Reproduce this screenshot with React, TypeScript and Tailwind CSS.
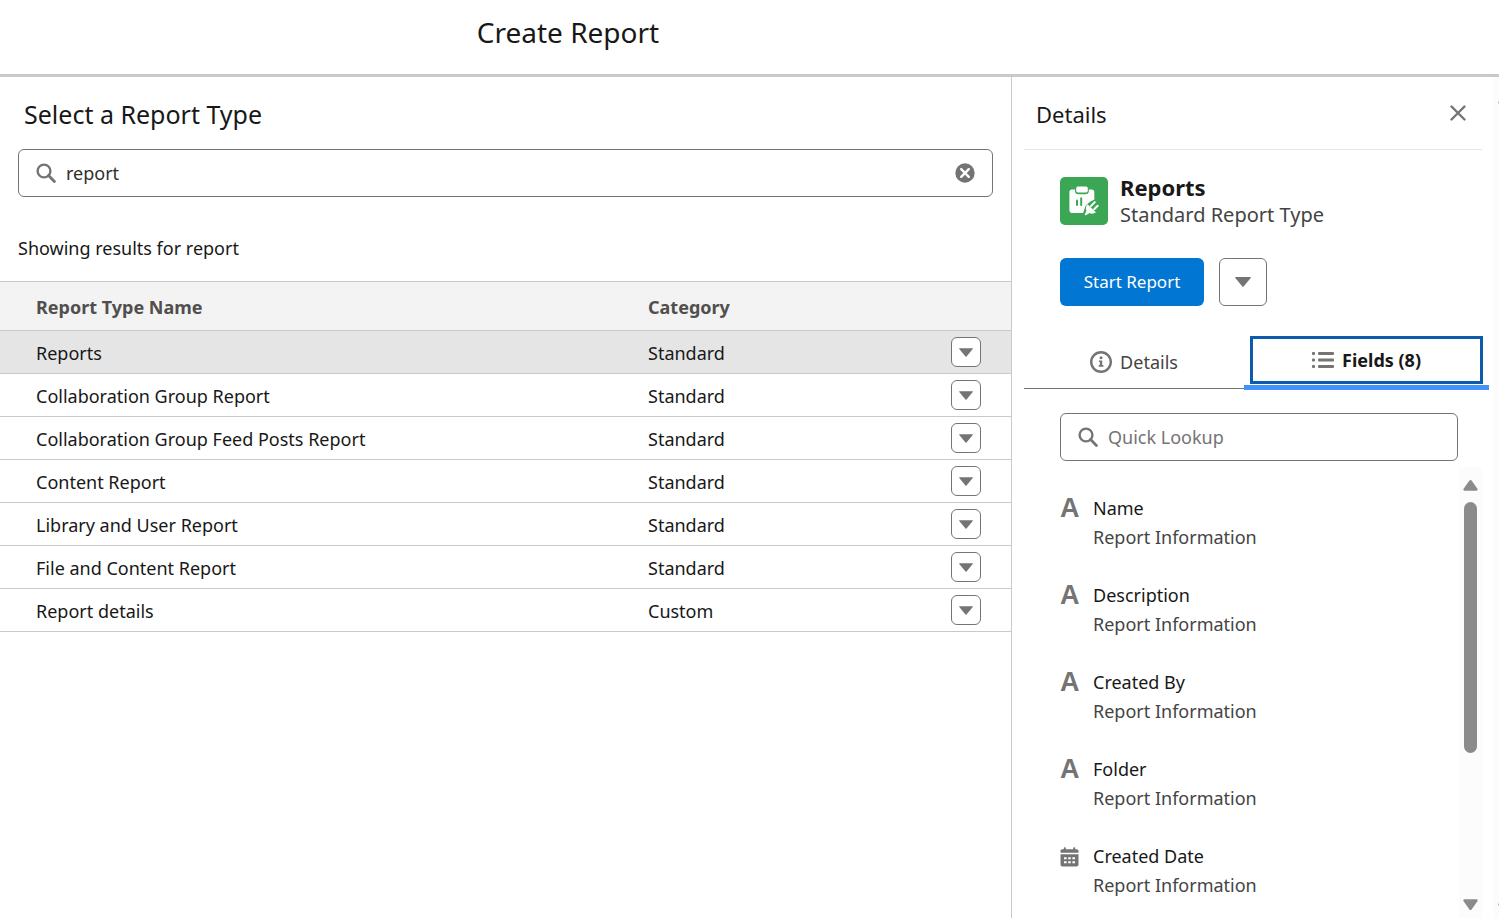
import { useState } from "react";
import clsx from "clsx";

interface ReportType {
  name: string;
  category: string;
}

interface ReportField {
  label: string;
  kind: "text" | "date";
}

const reportTypes: ReportType[] = [
  { name: "Reports", category: "Standard" },
  { name: "Collaboration Group Report", category: "Standard" },
  { name: "Collaboration Group Feed Posts Report", category: "Standard" },
  { name: "Content Report", category: "Standard" },
  { name: "Library and User Report", category: "Standard" },
  { name: "File and Content Report", category: "Standard" },
  { name: "Report details", category: "Custom" },
];

const fields: ReportField[] = [
  { label: "Name", kind: "text" },
  { label: "Description", kind: "text" },
  { label: "Created By", kind: "text" },
  { label: "Folder", kind: "text" },
  { label: "Created Date", kind: "date" },
];

const SearchIcon = () => (
  <svg viewBox="0 0 20 20" className="size-5 shrink-0 text-[#747474]" fill="none" stroke="currentColor" aria-hidden="true">
    <circle cx="8" cy="8" r="6.4" strokeWidth="2.4" />
    <path d="M12.6 12.6L18.4 18.4" strokeWidth="2.8" strokeLinecap="round" />
  </svg>
);

const ClearIcon = () => (
  <svg viewBox="0 0 20 20" className="size-5" aria-hidden="true">
    <circle cx="10" cy="10" r="9.7" fill="#747474" />
    <path d="M6.2 6.2L13.8 13.8M13.8 6.2L6.2 13.8" stroke="#fff" strokeWidth="2.4" strokeLinecap="round" />
  </svg>
);

const CaretDown = ({ className }: { className: string }) => (
  <svg viewBox="0 0 16 10" className={className} fill="#747474" aria-hidden="true">
    <path d="M.8 0H15.2c.6 0 .8.5.5.9L8.6 9.6c-.3.4-.9.4-1.2 0L.3.9C0 .5.2 0 .8 0z" />
  </svg>
);

const ScrollArrow = ({ down }: { down?: boolean }) => (
  <svg viewBox="0 0 15 11" className={clsx("h-[11px] w-[15px] shrink-0", down && "rotate-180")} fill="#8b8b8b" aria-hidden="true">
    <path d="M6.4.6c.5-.8 1.7-.8 2.2 0l5.8 8.2c.6.9.1 2-1 2H1.6c-1.1 0-1.6-1.1-1-2z" />
  </svg>
);

const ReportIcon = () => (
  <svg viewBox="0 0 48 48" className="size-12 shrink-0" aria-hidden="true">
    <rect width="48" height="48" rx="5" fill="#3ba755" />
    <path d="M11.8 12.5H15v1.2c0 2.3 1.2 3.6 3.4 3.6h6.9c2.3 0 3.6-1.3 3.6-3.6v-1.2h2.8c1.6 0 2.6 1 2.6 2.6v7.6c-2.6.7-5 2.3-7.2 4.6-2.9 2.9-2.3 5.4-4 8.6H12c-1.5 0-2.6-1-2.6-2.6V15.1c0-1.6.9-2.6 2.4-2.6z" fill="#fff" />
    <rect x="16.2" y="9.6" width="11.6" height="5.900" rx="1.8" fill="#fff" />
    <path d="M17 23.5v4.5M21.2 21.3v6.7" stroke="#3ba755" strokeWidth="2" strokeLinecap="round" />
    <path d="M27.5 27.3l8.5 8.3c-2.4 1.3-4.7 1.5-6.5.5l-3.6 2.1c-.7.4-1.3-.2-1-.9l1.5-3.6c-.9-2.2-.5-4.5 1.1-6.4z" fill="#fff" />
    <path d="M31 29l3.8-3.9M34.200 32.200l3.500-3.500" stroke="#fff" strokeWidth="2" strokeLinecap="round" />
  </svg>
);

const InfoIcon = () => (
  <svg viewBox="0 0 22 22" className="size-[22px] shrink-0" aria-hidden="true">
    <circle cx="11" cy="11" r="9.8" fill="none" stroke="#747474" strokeWidth="2.4" />
    <circle cx="11" cy="6.8" r="1.5" fill="#747474" />
    <path d="M9 9.400h3.200v4.700h1.200v1.700H8.700v-1.700h1.200v-3H9z" fill="#747474" />
  </svg>
);

const ListIcon = () => (
  <svg viewBox="0 0 22 16" className="h-4 w-[22px] shrink-0" fill="#747474" aria-hidden="true">
    <rect width="3" height="3" rx="1" />
    <rect x="6" width="16" height="3" rx="1" />
    <rect y="6.500" width="3" height="3" rx="1" />
    <rect x="6" y="6.500" width="16" height="3" rx="1" />
    <rect y="13" width="3" height="3" rx="1" />
    <rect x="6" y="13" width="16" height="3" rx="1" />
  </svg>
);

const CalendarIcon = () => (
  <svg viewBox="0 0 19 20" className="h-5 w-[19px]" aria-hidden="true">
    <path d="M.5 5.800V4c0-1 .8-1.700 1.700-1.700h1.600V1.300c0-1.300 2-1.300 2 0v1h7.400v-1c0-1.300 2-1.300 2 0v1h1.600c.9 0 1.700.7 1.700 1.700v1.800z" fill="#747474" />
    <path d="M.5 7.300h18v10.200c0 1.100-.9 2-2 2h-14c-1.100 0-2-.9-2-2z" fill="#747474" />
    <path d="M4 10.200h2.600v2H4zM8.200 10.200h2.600v2H8.200zM12.400 10.200H15v2h-2.600zM4 14.200h2.600v2H4zM8.200 14.200h2.600v2H8.200zM12.400 14.200H15v2h-2.600z" fill="#fff" />
  </svg>
);

const ReportTypeTable = () => {
  const [selected, setSelected] = useState("Reports");

  return (
    <table className="w-full table-fixed border-collapse text-left text-lg leading-6">
      <thead>
        <tr className="h-[49px] border-y border-[#c9c9c9] bg-[#f3f3f3] text-[#514f4d]">
          <th className="p-0 pt-[2px] pl-9 font-bold">Report Type Name</th>
          <th className="w-[303px] p-0 pt-[2px] font-bold">Category</th>
          <th className="w-[60px] p-0" aria-label="Actions" />
        </tr>
      </thead>
      <tbody>
        {reportTypes.map((type) => (
          <tr
            key={type.name}
            onClick={() => setSelected(type.name)}
            className={clsx("h-[43px] border-b border-[#c9c9c9]", type.name === selected && "bg-[#e5e5e5]")}
          >
            <td className="p-0 pt-[2px] pl-9">{type.name}</td>
            <td className="p-0 pt-[2px]">{type.category}</td>
            <td className="p-0">
              <button
                aria-label={`Actions for ${type.name}`}
                className="flex size-[30px] items-center justify-center rounded-md border border-[#747474] bg-white"
              >
                <CaretDown className="h-[9px] w-[14px]" />
              </button>
            </td>
          </tr>
        ))}
      </tbody>
    </table>
  );
};

const FieldList = () => (
  <div className="mt-[6px] mr-3 flex min-h-0 flex-1">
    <ul className="min-h-0 flex-1 overflow-hidden pt-[27px] pl-9 text-lg leading-[29px]">
      {fields.map((field) => (
        <li key={field.label} className="flex pb-[29px]">
          <span className="flex h-[29px] w-[33px] shrink-0 items-center text-[#747474]">
            {field.kind === "date" ? (
              <CalendarIcon />
            ) : (
              <span className="font-['Liberation_Sans',sans-serif] text-[27px] font-bold" aria-hidden="true">A</span>
            )}
          </span>
          <div>
            <p>{field.label}</p>
            <p className="text-[#444]">Report Information</p>
          </div>
        </li>
      ))}
    </ul>
    {/* Scrollbar */}
    <div className="flex w-[23px] flex-col items-center bg-[#fcfcfc] pt-[13px] pb-2" aria-hidden="true">
      <ScrollArrow />
      <div className="flex flex-1 flex-col py-[11px]">
        <div className="h-[65%] w-[13px] rounded-full bg-[#8b8b8b]" />
      </div>
      <ScrollArrow down />
    </div>
  </div>
);

const DetailsPanel = () => (
  <aside className="flex w-[487px] shrink-0">
    <div className="flex min-w-0 flex-1 flex-col pl-3">
      <div className="mr-3 flex h-[73px] items-center justify-between border-b border-[#e5e5e5] pr-3 pl-3">
        <h2 className="pt-[2px] text-[22px] leading-8">Details</h2>
        <button aria-label="Close" className="flex size-6 items-center justify-center">
          <svg viewBox="0 0 16 16" className="size-4" stroke="#747474" strokeWidth="2.4" strokeLinecap="round" aria-hidden="true">
            <path d="M1.500 1.500L14.500 14.500M14.500 1.500L1.500 14.500" />
          </svg>
        </button>
      </div>

      <div className="flex gap-3 pt-[27px] pl-9">
        <ReportIcon />
        <div className="-mt-1">
          <h3 className="text-[22px] leading-7 font-bold">Reports</h3>
          <p className="text-xl leading-7 text-[#444]">Standard Report Type</p>
        </div>
      </div>

      <div className="flex gap-[15px] pt-[29px] pl-9">
        <button className="h-12 w-36 rounded-md bg-[#0176d3] text-[17px] text-white">Start Report</button>
        <button aria-label="More actions" className="flex size-12 items-center justify-center rounded-md border border-[#747474]">
          <CaretDown className="h-[10px] w-4" />
        </button>
      </div>

      <div role="tablist" className="mr-[5px] flex h-[84px] shrink-0 items-end text-lg">
        <button
          role="tab"
          aria-selected="false"
          className="mb-px flex h-[54px] w-[220px] items-center justify-center gap-2 border-b border-[#747474] text-[#444]"
        >
          <InfoIcon />
          Details
        </button>
        <button role="tab" aria-selected="true" className="h-[54px] flex-1 border-b-[5px] border-[#4294f7] px-[6px] font-bold">
          <span className="mb-px flex h-12 items-center justify-center gap-2 border-[3px] border-[#0b5cab]">
            <ListIcon />
            Fields (8)
          </span>
        </button>
      </div>

      <label className="mt-[23px] mr-9 ml-9 flex h-12 shrink-0 items-center gap-[10px] rounded-md border border-[#747474] px-[17px]">
        <SearchIcon />
        <input
          type="text"
          aria-label="Quick Lookup"
          placeholder="Quick Lookup"
          className="min-w-0 flex-1 text-lg outline-none placeholder:text-[#747474]"
        />
      </label>

      <FieldList />
    </div>
    {/* Edge of the page scrollbar */}
    <div className="flex w-[5px] flex-col justify-between overflow-hidden bg-[#fcfcfc] pt-4 pb-1 pl-1" aria-hidden="true">
      <ScrollArrow />
      <ScrollArrow down />
    </div>
  </aside>
);

export default function App() {
  const [query, setQuery] = useState("report");

  return (
    <div className="flex h-screen flex-col overflow-hidden bg-white font-['Noto_Sans','Open_Sans',sans-serif] text-[#181818]">
      <header className="flex h-[77px] shrink-0 items-center justify-center border-b-[3px] border-[#c9c9c9] pr-[363px] pb-[10px]">
        <h1 className="text-[28px] leading-9">Create Report</h1>
      </header>

      <div className="flex min-h-0 flex-1">
        <main className="min-w-0 flex-1 border-r border-[#c9c9c9]">
          <h2 className="pt-[19px] pl-6 text-[25px] leading-9">Select a Report Type</h2>
          <div className="mt-[17px] mr-[18px] ml-[18px] flex h-12 items-center gap-[10px] rounded-md border border-[#747474] px-[17px]">
            <SearchIcon />
            <input
              type="text"
              aria-label="Search report types"
              value={query}
              onChange={(e) => setQuery(e.target.value)}
              className="min-w-0 flex-1 text-lg text-[#2e2e2e] outline-none"
            />
            <button aria-label="Clear search" onClick={() => setQuery("")}>
              <ClearIcon />
            </button>
          </div>
          <p className="pt-[37px] pb-[19px] pl-[18px] text-lg leading-7">Showing results for {query}</p>
          <ReportTypeTable />
        </main>
        <DetailsPanel />
      </div>
    </div>
  );
}
